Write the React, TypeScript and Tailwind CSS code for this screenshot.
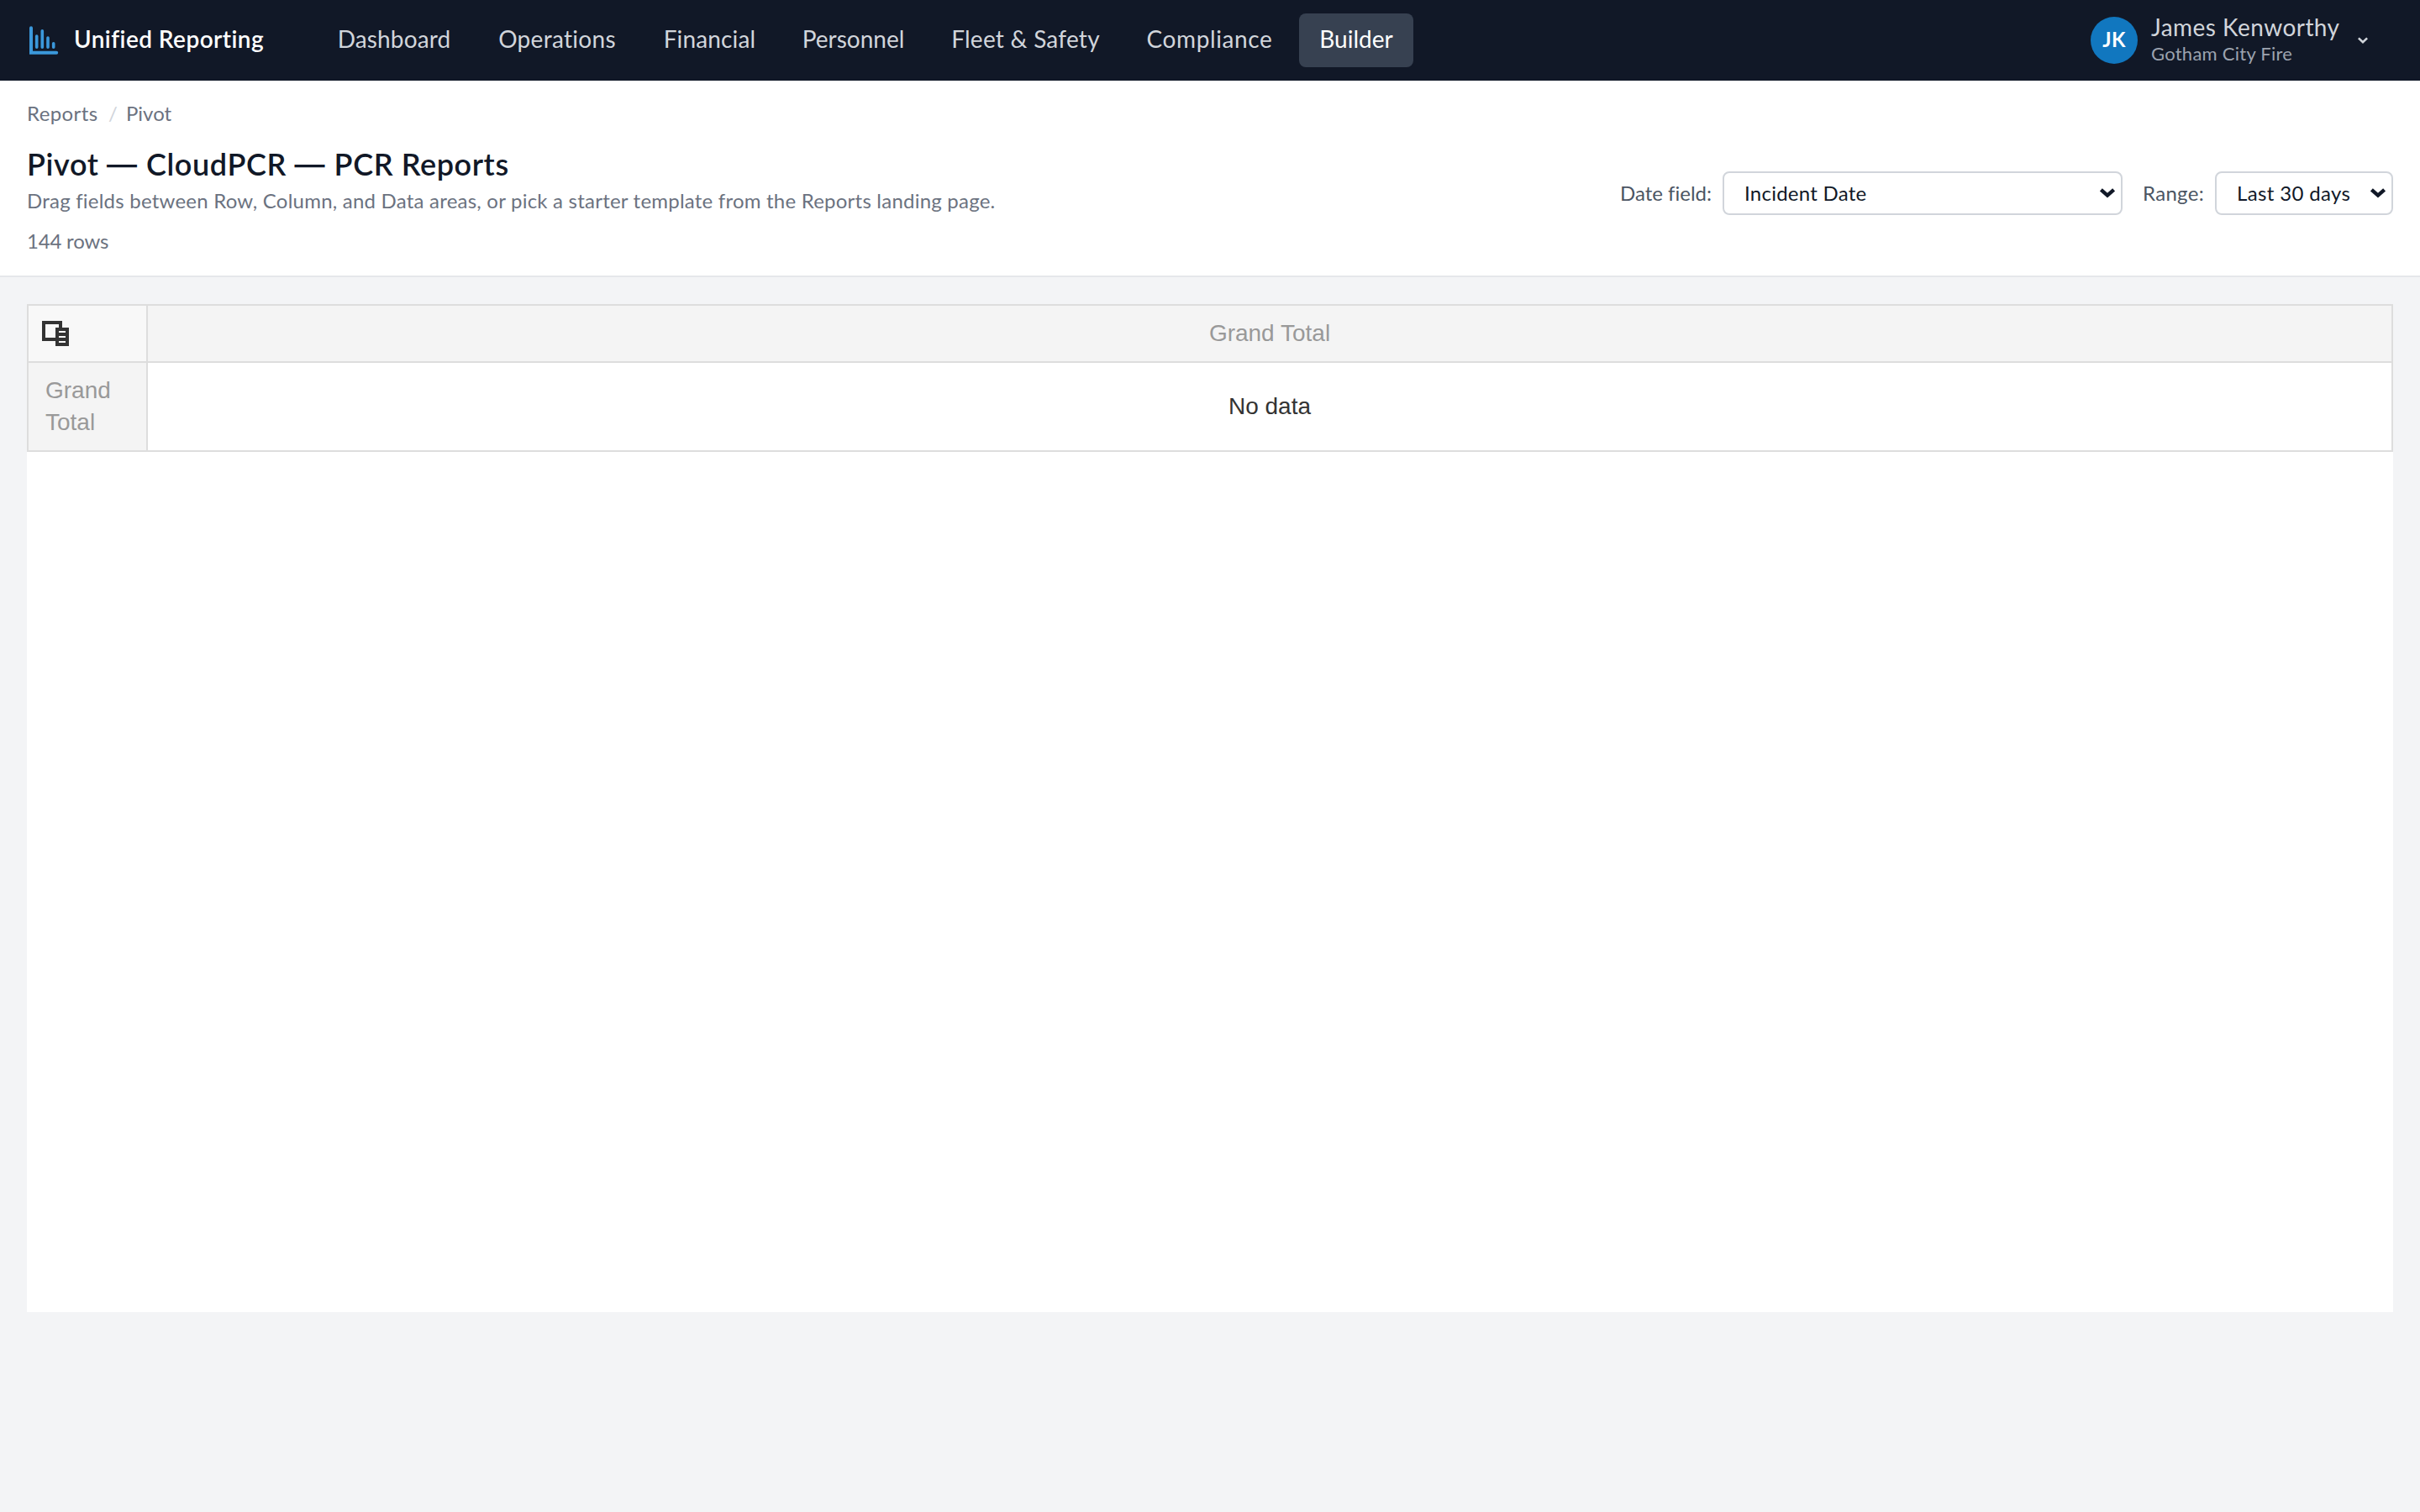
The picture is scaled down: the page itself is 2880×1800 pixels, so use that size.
const navItems = [
  { label: "Dashboard", box: "w-[182px] tracking-[0.15px]" },
  { label: "Operations", box: "w-[190px] tracking-[0.3px]" },
  { label: "Financial", box: "w-[157px] tracking-[0.15px]" },
  { label: "Personnel", box: "w-[169px]" },
  { label: "Fleet & Safety", box: "w-[225px] tracking-[0.25px]" },
  { label: "Compliance", box: "w-[197px] tracking-[0.6px]" },
  { label: "Builder", box: "w-[136px]", active: true },
];

function ChartLogo() {
  return (
    <svg width="40" height="40" viewBox="0 0 40 40" fill="none" stroke="#3b98db" strokeLinecap="round" className="shrink-0">
      <path d="M5 5.2V34.8H35.2" strokeWidth="4" />
      <path d="M11.7 15V28.2M18.3 8.8V28.2M25 17.1V28.2M31.7 23.8V28.2" strokeWidth="3.6" />
    </svg>
  );
}

function SelectChevron() {
  return (
    <svg width="20" height="14" viewBox="0 0 20 14" fill="none" stroke="#111827" strokeWidth="4.4" className="shrink-0">
      <path d="M2.4 2.8L10 9.6L17.6 2.8" />
    </svg>
  );
}

function FieldListIcon() {
  return (
    <svg width="32" height="30" viewBox="0 0 32 30" shapeRendering="crispEdges">
      <path fill="#333" d="M0 0H24V8H32V30H16V24H0ZM4 4V20H16V8H20V4Z" fillRule="evenodd" />
      <path fill="#f8f8f8" d="M20 12H28V14H20ZM20 18H28V20H20ZM20 24H28V26H20Z" />
    </svg>
  );
}

function Header() {
  return (
    <header className="flex h-24 items-center bg-[#111827] px-8 text-[28px] leading-[34px] text-[#d1d5db]">
      <div className="flex w-[346px] items-center">
        <ChartLogo />
        <span className="ml-4 whitespace-nowrap pb-1 font-semibold tracking-[0.43px] text-white">Unified Reporting</span>
      </div>
      <nav className="flex gap-2">
        {navItems.map((item) => (
          <a
            key={item.label}
            className={`flex h-16 items-center justify-center whitespace-nowrap rounded-lg pb-1 ${item.box} ${item.active ? "bg-[#374151] text-white" : ""}`}
          >
            {item.label}
          </a>
        ))}
      </nav>
      <button className="ml-auto mr-6 flex items-center text-left">
        <span className="flex size-14 items-center justify-center rounded-full bg-[#1177bf] pb-0.5 text-2xl font-bold tracking-[0.3px] text-white">
          JK
        </span>
        <span className="mb-1 ml-4 flex w-[240px] flex-col whitespace-nowrap">
          <span className="h-9 leading-9 tracking-[0.45px]">James Kenworthy</span>
          <span className="h-7 text-[22px] leading-7 tracking-[0.25px] text-[#9ca3af]">Gotham City Fire</span>
        </span>
        <svg width="24" height="24" viewBox="0 0 24 24" fill="none" stroke="#d1d5db" strokeWidth="2.6">
          <path d="M6.9 9.4L12 14.2L17.1 9.4" />
        </svg>
      </button>
    </header>
  );
}

function PageHeading() {
  return (
    <section className="h-[234px] border-b-2 border-[#e5e7eb] bg-white px-8 pt-6 text-2xl text-[#6b7280]">
      <div className="mb-[22px] flex h-[30px] leading-[30px]">
        <span className="w-[97px] tracking-[0.4px]">Reports</span>
        <span className="w-[21px] text-[#d1d5db]">/</span>
        <span>Pivot</span>
      </div>
      <div className="flex items-start justify-between">
        <div className="whitespace-nowrap">
          <h1 className="h-11 text-4xl leading-[46px] font-semibold tracking-[0.6px] text-[#111827]">
            Pivot <span className="font-['Inter'] font-medium tracking-[1.4px]">—</span> CloudPCR{" "}
            <span className="font-['Inter'] font-medium tracking-[1.4px]">—</span> PCR Reports
          </h1>
          <p className="h-[46px] leading-[46px] tracking-[0.22px]">
            Drag fields between Row, Column, and Data areas, or pick a starter template from the Reports landing page.
          </p>
          <p className="leading-[50px] tracking-[-0.2px]">144 rows</p>
        </div>
        <div className="mt-8 flex items-center whitespace-nowrap text-[#4b5563]">
          <span className="w-[122px]">Date field:</span>
          <div className="flex h-[52px] w-[476px] items-center justify-between rounded-lg border-2 border-[#d1d5db] bg-white pl-6 pr-[6px] text-[#111827]">
            <span className="tracking-[0.25px]">Incident Date</span>
            <SelectChevron />
          </div>
          <span className="ml-6 w-[86px] tracking-[0.3px]">Range:</span>
          <div className="flex h-[52px] w-[212px] items-center justify-between rounded-lg border-2 border-[#d1d5db] bg-white pl-6 pr-[6px] text-[#111827]">
            <span className="tracking-[0.35px]">Last 30 days</span>
            <SelectChevron />
          </div>
        </div>
      </div>
    </section>
  );
}

function PivotGrid() {
  return (
    <main className="m-8 h-[1200px] bg-white font-['Liberation_Sans',Arial,sans-serif] text-[28px] leading-[38px]">
      <div className="grid grid-cols-[140px_1fr] grid-rows-[66px_104px] gap-0.5 border-2 border-[#ddd] bg-[#ddd]">
        <div className="bg-[#f8f8f8] pl-4 pt-[18px]">
          <FieldListIcon />
        </div>
        <div className="flex items-center justify-center bg-[#f4f4f4] text-[#999]">Grand Total</div>
        <div className="bg-[#f4f4f4] pl-5 pr-10 pt-[14px] text-[#999]">Grand Total</div>
        <div className="flex items-center justify-center bg-white text-[#333]">No data</div>
      </div>
    </main>
  );
}

export default function App() {
  return (
    <div className="flex h-[1800px] w-[2880px] flex-col overflow-hidden bg-[#f3f4f6] font-['Lato',sans-serif] [font-variant-ligatures:none]">
      <Header />
      <PageHeading />
      <PivotGrid />
    </div>
  );
}
